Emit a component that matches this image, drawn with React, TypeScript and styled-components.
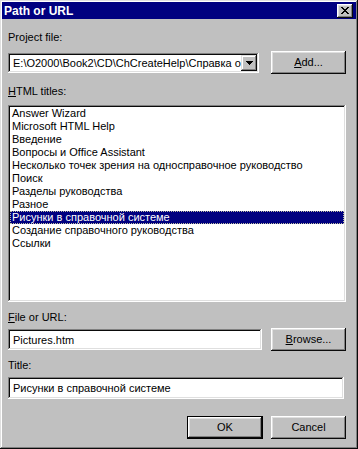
import React from "react";
import styled, { createGlobalStyle } from "styled-components";

const Global = createGlobalStyle`
  html, body { margin: 0; padding: 0; background: #c0c0c0; }
  body { font-family: "Liberation Sans", Arial, sans-serif; font-size: 11px; color: #000; }
  * { box-sizing: border-box; }
`;

const Window = styled.div`
  width: 358px;
  height: 449px;
  background: #c0c0c0;
  padding: 2px;
  display: flex;
  flex-direction: column;
  box-shadow: inset -1px -1px #0a0a0a, inset 1px 1px #dfdfdf,
    inset -2px -2px #808080, inset 2px 2px #ffffff;
`;

const TitleBar = styled.div`
  height: 17px;
  background: #000080;
  display: flex;
  align-items: center;
  justify-content: space-between;
  padding: 0 3px 0 2px;
`;

const TitleText = styled.span`
  color: #fff;
  font-weight: bold;
  font-size: 12px;
  line-height: 14px;
`;

const CloseButton = styled.div`
  width: 16px;
  height: 14px;
  background: #c0c0c0;
  display: flex;
  align-items: center;
  justify-content: center;
  box-shadow: inset -1px -1px #0a0a0a, inset 1px 1px #ffffff,
    inset -2px -2px #808080, inset 2px 2px #dfdfdf;
`;

const Content = styled.div`
  flex: 1;
  display: flex;
  flex-direction: column;
  padding: 12px 10px 0 6px;
`;

const Label = styled.div<{ $mt?: number; $mb: number; $mnemonic?: boolean }>`
  height: 13px;
  line-height: 13px;
  margin-top: ${(p) => p.$mt ?? 0}px;
  margin-bottom: ${(p) => p.$mb}px;
  white-space: nowrap;
  ${(p) =>
    p.$mnemonic
      ? `&::first-letter { text-decoration: underline; text-underline-offset: 1px; }`
      : ""}
`;

const Row = styled.div<{ $gap: number }>`
  display: flex;
  align-items: center;
  gap: ${(p) => p.$gap}px;
  height: 23px;
`;

const Field = styled.div<{ $w: number; $h: number }>`
  width: ${(p) => p.$w}px;
  height: ${(p) => p.$h}px;
  background: #fff;
  padding: 2px 2px 2px 5px;
  display: flex;
  align-items: center;
  white-space: nowrap;
  overflow: hidden;
  box-shadow: inset -1px -1px #ffffff, inset 1px 1px #808080,
    inset -2px -2px #dfdfdf, inset 2px 2px #0a0a0a;
`;

const Combo = styled.div`
  width: 251px;
  height: 20px;
  background: #fff;
  padding: 2px;
  display: flex;
  box-shadow: inset -1px -1px #ffffff, inset 1px 1px #808080,
    inset -2px -2px #dfdfdf, inset 2px 2px #0a0a0a;
`;

const ComboText = styled.div`
  flex: 1;
  overflow: hidden;
  white-space: nowrap;
  padding-left: 3px;
  line-height: 16px;
`;

const DropButton = styled.div`
  width: 16px;
  height: 16px;
  background: #c0c0c0;
  display: flex;
  align-items: center;
  justify-content: center;
  box-shadow: inset -1px -1px #0a0a0a, inset 1px 1px #dfdfdf,
    inset -2px -2px #808080, inset 2px 2px #ffffff;
`;

const Button = styled.div<{ $w: number; $default?: boolean; $mnemonic?: boolean }>`
  width: ${(p) => p.$w}px;
  height: 23px;
  background: #c0c0c0;
  display: flex;
  align-items: center;
  justify-content: center;
  line-height: 13px;
  box-shadow: inset -1px -1px #0a0a0a, inset 1px 1px #ffffff,
    inset -2px -2px #808080, inset 2px 2px #dfdfdf;
  ${(p) => (p.$default ? `border: 1px solid #000;` : "")}
`;

const Caption = styled.span<{ $mnemonic?: boolean }>`
  ${(p) =>
    p.$mnemonic
      ? `&::first-letter { text-decoration: underline; text-underline-offset: 1px; }`
      : ""}
  display: inline-block;
`;

const ListBox = styled.div`
  width: 338px;
  height: 197px;
  background: #fff;
  padding: 2px;
  box-shadow: inset -1px -1px #ffffff, inset 1px 1px #808080,
    inset -2px -2px #dfdfdf, inset 2px 2px #0a0a0a;
`;

const ListItem = styled.div<{ $selected?: boolean }>`
  height: 13px;
  line-height: 13px;
  padding-left: 2px;
  white-space: nowrap;
  background: ${(p) => (p.$selected ? "#000080" : "transparent")};
  color: ${(p) => (p.$selected ? "#fff" : "#000")};
  outline: ${(p) => (p.$selected ? "1px dotted #c0c0a0" : "none")};
  outline-offset: -1px;
`;

const ButtonsRow = styled.div`
  display: flex;
  justify-content: flex-end;
  gap: 8px;
  margin-top: 17px;
`;

const U = styled.span`
  text-decoration: underline;
  text-underline-offset: 1px;
`;

const CloseIcon = () => (
  <svg width="8" height="7" viewBox="0 0 8 7" shapeRendering="crispEdges">
    <path
      d="M0 0h2v1H0zM6 0h2v1H6zM1 1h2v1H1zM5 1h2v1H5zM2 2h4v1H2zM3 3h2v1H3zM2 4h4v1H2zM1 5h2v1H1zM5 5h2v1H5zM0 6h2v1H0zM6 6h2v1H6z"
      fill="#000"
    />
  </svg>
);

const DownArrow = () => (
  <svg width="7" height="4" viewBox="0 0 7 4" shapeRendering="crispEdges">
    <path d="M0 0h7v1H0zM1 1h5v1H1zM2 2h3v1H2zM3 3h1v1H3z" fill="#000" />
  </svg>
);

const items = [
  "Answer Wizard",
  "Microsoft HTML Help",
  "Введение",
  "Вопросы и Office Assistant",
  "Несколько точек зрения на односправочное руководство",
  "Поиск",
  "Разделы руководства",
  "Разное",
  "Рисунки в справочной системе",
  "Создание справочного руководства",
  "Ссылки",
];

export default function App() {
  return (
    <>
      <Global />
      <Window>
        <TitleBar>
          <TitleText>Path or URL</TitleText>
          <CloseButton>
            <CloseIcon />
          </CloseButton>
        </TitleBar>
        <Content>
          <Label $mb={7}>
            Pro<U>j</U>ect file:
          </Label>
          <Row $gap={12}>
            <Combo>
              <ComboText>E:\O2000\Book2\CD\ChCreateHelp\Справка о</ComboText>
              <DropButton>
                <DownArrow />
              </DropButton>
            </Combo>
            <Button $w={75}>
              <Caption $mnemonic>Add...</Caption>
            </Button>
          </Row>
          <Label $mt={11} $mb={7} $mnemonic>
            HTML titles:
          </Label>
          <ListBox>
            {items.map((t, i) => (
              <ListItem key={t} $selected={i === 8}>
                {t}
              </ListItem>
            ))}
          </ListBox>
          <Label $mt={9} $mb={4} $mnemonic>
            File or URL:
          </Label>
          <Row $gap={9}>
            <Field $w={254} $h={21}>Pictures.htm</Field>
            <Button $w={75}>
              <Caption $mnemonic>Browse...</Caption>
            </Button>
          </Row>
          <Label $mt={8} $mb={5}>
            Title:
          </Label>
          <Field $w={336} $h={22}>Рисунки в справочной системе</Field>
          <ButtonsRow>
            <Button $w={76} $default>
              <Caption>OK</Caption>
            </Button>
            <Button $w={75}>
              <Caption>Cancel</Caption>
            </Button>
          </ButtonsRow>
        </Content>
      </Window>
    </>
  );
}
